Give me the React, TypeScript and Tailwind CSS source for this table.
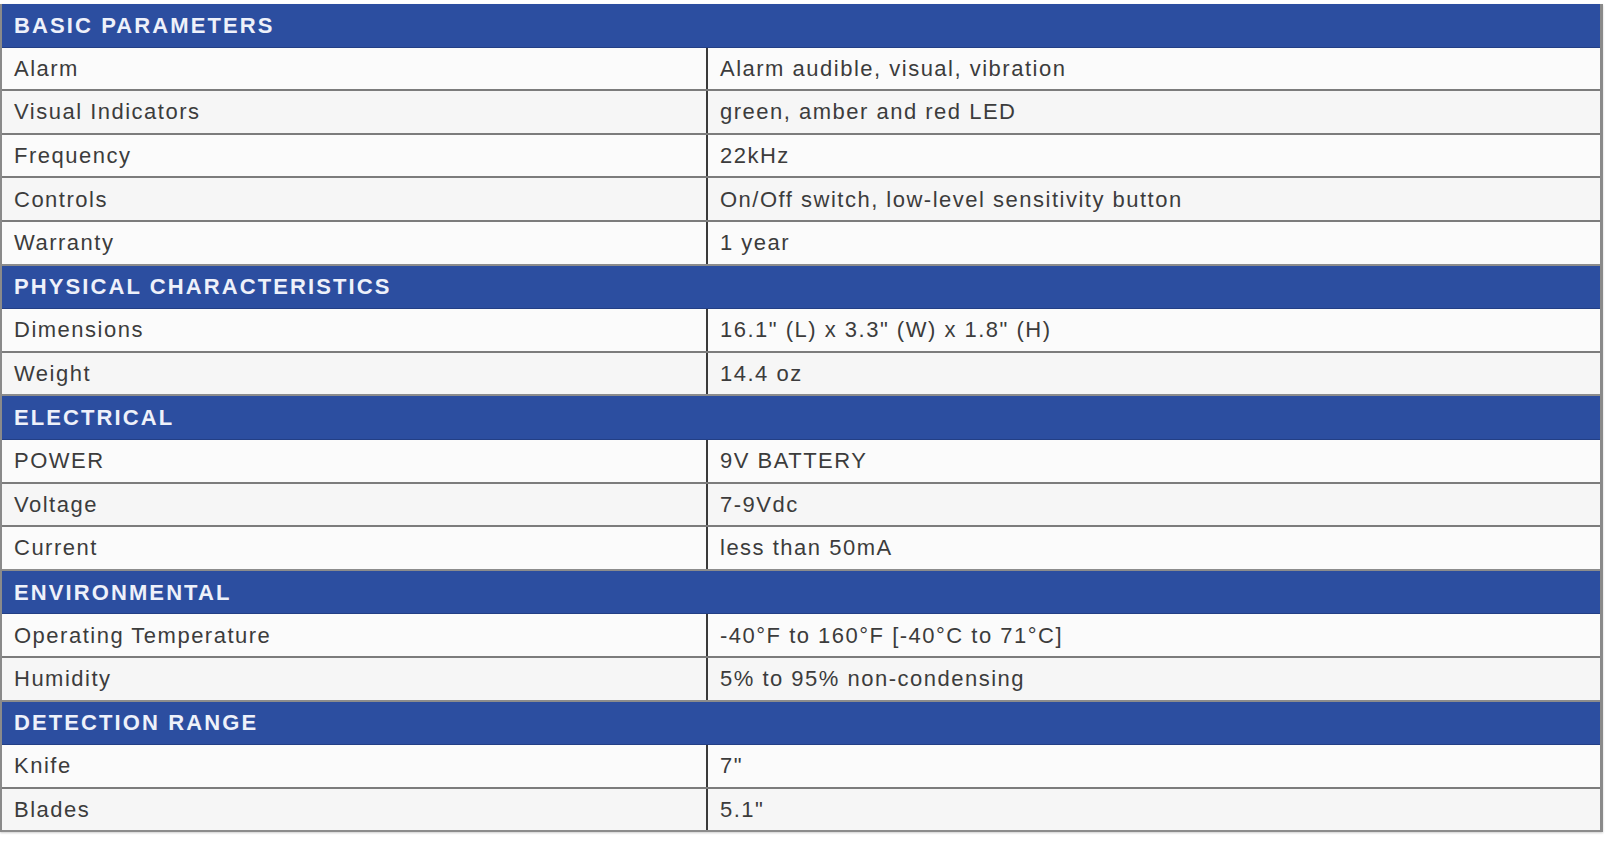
const sections: { title: string; rows: [string, string][] }[] = [
  {
    title: "BASIC PARAMETERS",
    rows: [
      ["Alarm", "Alarm audible, visual, vibration"],
      ["Visual Indicators", "green, amber and red LED"],
      ["Frequency", "22kHz"],
      ["Controls", "On/Off switch, low-level sensitivity button"],
      ["Warranty", "1 year"],
    ],
  },
  {
    title: "PHYSICAL CHARACTERISTICS",
    rows: [
      ["Dimensions", "16.1\" (L) x 3.3\" (W) x 1.8\" (H)"],
      ["Weight", "14.4 oz"],
    ],
  },
  {
    title: "ELECTRICAL",
    rows: [
      ["POWER", "9V BATTERY"],
      ["Voltage", "7-9Vdc"],
      ["Current", "less than 50mA"],
    ],
  },
  {
    title: "ENVIRONMENTAL",
    rows: [
      ["Operating Temperature", "-40°F to 160°F [-40°C to 71°C]"],
      ["Humidity", "5% to 95% non-condensing"],
    ],
  },
  {
    title: "DETECTION RANGE",
    rows: [
      ["Knife", "7\""],
      ["Blades", "5.1\""],
    ],
  },
];

export default function App() {
  return (
    <div className="w-[1612px] h-[843px] bg-white pt-[4px] font-['Liberation_Sans',Arial,sans-serif]">
      <div className="w-[1603px] border-l-2 border-r-[3px] border-[#8a8a8a] shadow-[0_1px_2px_rgba(0,0,0,0.2)]">
        {sections.map((s) => (
          <div key={s.title}>
            {/* Section header */}
            <div className="h-[43.6px] bg-[#2c4ea0] border-b border-[#233f85] flex items-center px-[12px]">
              <span className="text-[22px] font-bold text-[#eef1fa] tracking-[2.1px]">
                {s.title}
              </span>
            </div>
            {s.rows.map(([k, v], i) => (
              <div
                key={k}
                className={`h-[43.6px] flex border-b-2 ${
                  i === s.rows.length - 1 ? "border-[#8c8c8c]" : "border-[#7c7c7c]"
                } ${i % 2 === 0 ? "bg-[#fbfbfb]" : "bg-[#f6f6f6]"}`}
              >
                <div className="w-[706px] flex items-center pl-[12px] border-r-2 border-[#3a3a3a]">
                  <span className="text-[22px] text-[#3c3c3c] tracking-[1.5px]">{k}</span>
                </div>
                <div className="flex-1 flex items-center pl-[12px]">
                  <span className="text-[22px] text-[#3c3c3c] tracking-[1.5px]">{v}</span>
                </div>
              </div>
            ))}
          </div>
        ))}
      </div>
    </div>
  );
}
